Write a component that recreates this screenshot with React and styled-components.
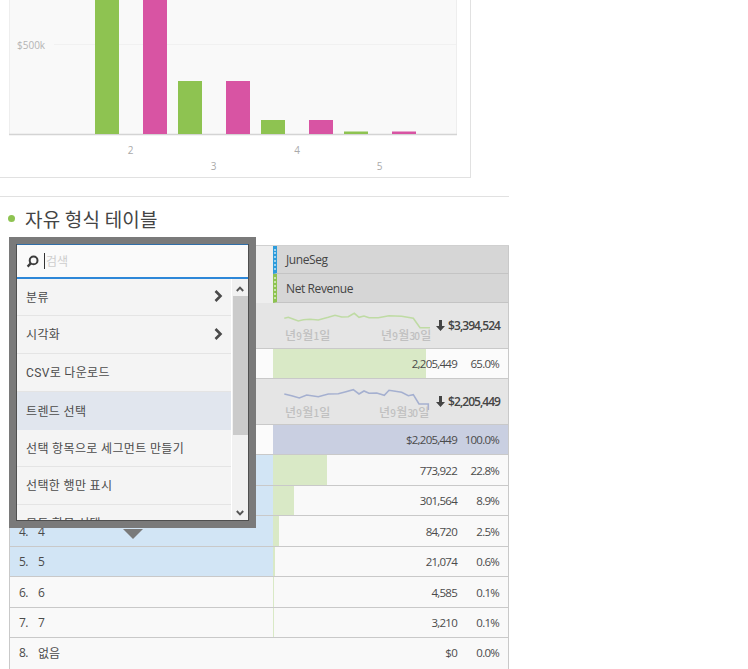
import React from "react";
import styled, { createGlobalStyle } from "styled-components";

const FONT = `"Open Sans", "Noto Sans CJK KR", sans-serif`;

const Global = createGlobalStyle`
  html, body { margin: 0; padding: 0; background: #fff; }
  body { font-family: ${FONT}; color: #4b4b4b; overflow: hidden; }
  * { box-sizing: border-box; }
`;

const Page = styled.div`
  width: 748px;
  height: 669px;
  overflow: hidden;
`;
const Content = styled.div`
  width: 509px;
`;
const ChartPanel = styled.div`
  width: 471px;
  height: 178px;
  border-right: 1px solid #e1e1e1;
  border-bottom: 1px solid #e1e1e1;
`;
const Section = styled.div`
  border-top: 1px solid #e1e1e1;
  margin-top: 18px;
  height: 49px;
  padding: 0 0 5px 8px;
  display: flex;
  align-items: center;
  gap: 10px;
`;
const Dot = styled.span`
  width: 7px;
  height: 7px;
  border-radius: 50%;
  background: #8ec351;
`;
const Title = styled.h2`
  margin: 0;
  font-size: 19px;
  font-weight: 400;
  letter-spacing: 0.2px;
  color: #444;
  font-family: "Noto Sans CJK KR", sans-serif;
`;
const TableWrap = styled.div`
  position: relative;
  margin-left: 9px;
  width: 500px;
`;
const Row = styled.div`
  display: grid;
  grid-template-columns: 263px 1fr;
  height: ${(p) => p.$h}px;
  padding-bottom: ${(p) => (p.$open ? 2 : 0)}px;
  border-bottom: 1px solid #c9c9c9;
  border-left: 1px solid #c9c9c9;
  border-right: 1px solid #c9c9c9;
  background: ${(p) => p.$bg || "#f9f9f9"};
  font-size: 12px;
`;
const LabelCell = styled.div`
  display: flex;
  align-items: center;
  padding-left: 9px;
  background: ${(p) => p.$bg || "transparent"};
`;
const Num = styled.span`
  width: 19px;
  letter-spacing: -0.5px;
`;
const ValueCell = styled.div`
  position: relative;
  display: flex;
  align-items: center;
  justify-content: flex-end;
  padding-right: 9px;
  background: ${(p) => p.$bg || "transparent"};
  font-size: 11.5px;
  letter-spacing: -0.75px;
`;
const Bar = styled.div`
  position: absolute;
  left: 0;
  top: 0;
  bottom: 0;
  background: #d9e9c6;
`;
const Amount = styled.span`
  position: relative;
`;
const Pct = styled.span`
  position: relative;
  width: 42px;
  text-align: right;
`;
const HeaderRow = styled.div`
  display: grid;
  grid-template-columns: 264px 1fr;
  height: ${(p) => p.$h}px;
  background: #eee;
  border-top: ${(p) => (p.$top ? "1px solid #d0d0d0" : "none")};
`;
const HeaderCell = styled.div`
  position: relative;
  display: flex;
  align-items: center;
  background: #d6d6d6;
  border-bottom: 1px solid #c4c4c4;
  padding-left: 9px;
  font-size: 12px;
  letter-spacing: -0.4px;
  color: #444;
  border-left: 4px solid ${(p) => p.$accent};
  border-right: 1px solid #c9c9c9;
  &::before {
    content: "";
    position: absolute;
    left: -3px;
    top: 3px;
    bottom: 3px;
    border-left: 2px dotted rgba(255, 255, 255, 0.55);
  }
`;
const SummaryRow = styled.div`
  position: relative;
  height: 46px;
  background: #e5e5e5;
  border: 1px solid #c9c9c9;
  border-top: none;
  display: flex;
  justify-content: flex-end;
  align-items: center;
  padding-right: 8px;
`;
const Spark = styled.svg`
  position: absolute;
  left: 274px;
  top: 6px;
`;
const SparkDate = styled.span`
  position: absolute;
  top: ${(p) => p.$top}px;
  left: ${(p) => p.$left}px;
  color: #c0c0c0;
  font-size: 12px;
  font-weight: 500;
  font-family: "Noto Sans CJK KR", sans-serif;
  letter-spacing: -0.8px;
  white-space: nowrap;
`;
const Digit = styled.span`
  font-size: 10px;
  margin: 0 1px;
`;
const Total = styled.span`
  position: relative;
  display: flex;
  align-items: center;
  gap: 3px;
  font-size: 12px;
  font-weight: 600;
  letter-spacing: -0.95px;
  color: #444;
`;
const Popup = styled.div`
  position: absolute;
  left: 0;
  top: -8px;
  width: 247px;
  height: 291px;
  background: #7a7a7a;
  padding: 7px;
`;
const PopupInner = styled.div`
  height: 277px;
  background: #f4f4f4;
  border: 1px solid #4f4f4f;
  border-top: none;
  overflow: hidden;
  display: flex;
  flex-direction: column;
`;
const SearchBox = styled.div`
  height: 35px;
  flex: none;
  background: #fafafa;
  border: 1px solid #2f6ea8;
  border-bottom: 2px solid #2d87d8;
  margin: 0 -1px;
  display: flex;
  align-items: center;
  padding-left: 9px;
`;
const SearchText = styled.span`
  font-size: 12px;
  color: #cdcdcd;
  border-left: 1px solid #333;
  margin-left: 5px;
  padding-left: 1px;
  line-height: 16px;
  font-family: "Noto Sans CJK KR", sans-serif;
`;
const MenuArea = styled.div`
  flex: 1;
  display: flex;
  min-height: 0;
`;
const Menu = styled.div`
  width: 214px;
  flex: none;
  overflow: hidden;
`;
const MenuItem = styled.div`
  height: ${(p) => p.$h}px;
  display: flex;
  align-items: center;
  justify-content: space-between;
  padding: 0 8px 2px 9px;
  font-size: 12px;
  letter-spacing: 0.35px;
  color: #4b4b4b;
  font-family: "Roboto", "Noto Sans CJK KR", sans-serif;
  background: ${(p) => (p.$active ? "#e1e6ee" : "transparent")};
  border-bottom: ${(p) => (p.$active ? "none" : "1px solid #e4e4e4")};
`;
const Scrollbar = styled.div`
  flex: 1;
  border-left: 1px solid #fff;
  display: flex;
  flex-direction: column;
  align-items: center;
  background: #f1f1f1;
`;
const ScrollBtn = styled.div`
  height: 17px;
  flex: none;
  display: flex;
  align-items: flex-end;
  padding-bottom: 4px;
  justify-content: center;
`;
const Thumb = styled.div`
  width: 15px;
  height: 139px;
  flex: none;
  background: #cbcbcb;
`;
const ScrollGap = styled.div`
  flex: 1;
`;
const Arrow = styled.div`
  position: absolute;
  left: 114px;
  top: 292px;
  width: 0;
  height: 0;
  border-left: 10px solid transparent;
  border-right: 10px solid transparent;
  border-top: 10px solid #7a7a7a;
`;
const ChartSvg = styled.svg`
  display: block;
`;

const Chart = () => (
  <ChartSvg width="470" height="177">
    <rect x="0" y="0" width="470" height="177" fill="#fff" />
    <rect x="9" y="0" width="447" height="134" fill="#f9f9f9" />
    <line x1="9.5" y1="0" x2="9.5" y2="134" stroke="#eee" />
    <line x1="456.5" y1="0" x2="456.5" y2="134" stroke="#eee" />
    <line x1="54" y1="44.5" x2="456" y2="44.5" stroke="#f1f1f1" />
    <line x1="9" y1="134.5" x2="457" y2="134.5" stroke="#d4d4d4" strokeWidth="1.5" />
    <text x="17" y="49" fontSize="10" fill="#b4b4b4" fontFamily="Open Sans">$500k</text>
    {[
      [95, 0, "#8ec351"],
      [143, 0, "#d854a3"],
      [178, 81, "#8ec351"],
      [226, 81, "#d854a3"],
      [261, 120, "#8ec351"],
      [309, 120, "#d854a3"],
      [344, 131.5, "#8ec351"],
      [392, 131.5, "#d854a3"],
    ].map(([x, y, c]) => (
      <rect key={x} x={x} y={y} width={24} height={134 - y} fill={c} />
    ))}
    {[
      [130.5, 154, "2"],
      [213.5, 170, "3"],
      [297, 154, "4"],
      [379.5, 170, "5"],
    ].map(([x, y, t]) => (
      <text key={t} x={x} y={y} fontSize="10" fill="#aaa" textAnchor="middle" fontFamily="Open Sans">{t}</text>
    ))}
  </ChartSvg>
);

const Sparkline = ({ color, points }) => (
  <Spark width="150" height="34">
    <polyline fill="none" stroke={color} strokeWidth="1.6" points={points} />
  </Spark>
);

const DateLabel = ({ day, left, top }) => (
  <SparkDate $left={left} $top={top}>
    년<Digit>9</Digit>월<Digit>{day}</Digit>일
  </SparkDate>
);

const ArrowDown = () => (
  <svg width="9" height="11" viewBox="0 0 9 11">
    <path d="M3 0h3v6h3L4.5 11 0 6h3z" fill="#444" />
  </svg>
);

const SearchIcon = () => (
  <svg width="13" height="13" viewBox="0 0 13 13">
    <circle cx="7.6" cy="5.4" r="3.9" fill="none" stroke="#3d3d3d" strokeWidth="2" />
    <path d="M5 8.2 1.6 11.6" stroke="#3d3d3d" strokeWidth="2.4" />
  </svg>
);

const MenuChevron = () => (
  <svg width="9" height="12" viewBox="0 0 9 12">
    <path d="M1.5 1 6.5 6 1.5 11" fill="none" stroke="#4a4a4a" strokeWidth="2.6" />
  </svg>
);

const ScrollUp = () => (
  <svg width="8" height="6" viewBox="0 0 8 6">
    <path d="M.8 5 4 1.6 7.2 5" fill="none" stroke="#555" strokeWidth="1.9" />
  </svg>
);

const ScrollDown = () => (
  <svg width="8" height="6" viewBox="0 0 8 6">
    <path d="M.8 1 4 4.4 7.2 1" fill="none" stroke="#555" strokeWidth="1.9" />
  </svg>
);

const rows = [
  { h: 31, blue: true, bar: 54, a: "773,922", p: "22.8%" },
  { h: 30, blue: true, bar: 21, a: "301,564", p: "8.9%" },
  { h: 31, n: "4.", l: "4", blue: true, bar: 6, a: "84,720", p: "2.5%" },
  { h: 30, n: "5.", l: "5", blue: true, bar: 2, a: "21,074", p: "0.6%" },
  { h: 31, n: "6.", l: "6", bar: 1, a: "4,585", p: "0.1%" },
  { h: 30, n: "7.", l: "7", bar: 1, a: "3,210", p: "0.1%" },
  { h: 32, n: "8.", l: "없음", a: "$0", p: "0.0%", open: true },
];

const menu = [
  { t: "분류", arrow: true, h: 37 },
  { t: "시각화", arrow: true, h: 38 },
  { t: "CSV로 다운로드", h: 38 },
  { t: "트렌드 선택", active: true, h: 38 },
  { t: "선택 항목으로 세그먼트 만들기", h: 37 },
  { t: "선택한 행만 표시", h: 38 },
  { t: "모든 항목 선택", h: 38 },
];

export default function App() {
  return (
    <Page>
      <Global />
      <Content>
        <ChartPanel>
          <Chart />
        </ChartPanel>
        <Section>
          <Dot />
          <Title>자유 형식 테이블</Title>
        </Section>
        <TableWrap>
          <HeaderRow $h={29} $top>
            <div />
            <HeaderCell $accent="#2d9cdb">JuneSeg</HeaderCell>
          </HeaderRow>
          <HeaderRow $h={29}>
            <div />
            <HeaderCell $accent="#8ec351">Net Revenue</HeaderCell>
          </HeaderRow>
          <SummaryRow>
            <Sparkline
              color="#bfdba4"
              points="0.3,9.3 4.3,8.3 8.3,9.7 14.3,12 19.3,10.7 26,10.3 34.3,11 44.3,8.3 51,6.3 57.7,8 64.3,7.7 70.3,4.3 75,8.3 80,7 85,8.7 94.3,8.7 105,6.7 117.7,7.3 129.3,9.3 136,18.7 146,18.7"
            />
            <DateLabel day="1" left={275} top={23} />
            <DateLabel day="30" left={371} top={23} />
            <Total>
              <ArrowDown />
              $3,394,524
            </Total>
          </SummaryRow>
          <Row $h={30} $bg="#fbfbfb">
            <LabelCell />
            <ValueCell>
              <Bar style={{ width: 153 }} />
              <Amount>2,205,449</Amount>
              <Pct>65.0%</Pct>
            </ValueCell>
          </Row>
          <SummaryRow>
            <Sparkline
              color="#a5b0d0"
              points="0.3,9 7.7,10.7 15.3,13 22.7,10 34.3,11.7 44.3,9 54.3,8.7 61,7 69.3,4.7 75,9 80,6 85,8.3 92.7,8 100.3,10.3 105,5.3 117.7,7.3 124.3,10.7 129.3,9.7 135,19 144.3,19 144.3,25"
            />
            <DateLabel day="1" left={275} top={24} />
            <DateLabel day="30" left={369} top={24} />
            <Total>
              <ArrowDown />
              $2,205,449
            </Total>
          </SummaryRow>
          <Row $h={30} $bg="#fbfbfb">
            <LabelCell />
            <ValueCell $bg="#c9cfe1">
              <Amount>$2,205,449</Amount>
              <Pct>100.0%</Pct>
            </ValueCell>
          </Row>
          {rows.map((r, i) => (
            <Row key={i} $h={r.h} $open={r.open}>
              <LabelCell $bg={r.blue ? "#d2e5f5" : undefined}>
                {r.n && <Num>{r.n}</Num>}
                {r.l}
              </LabelCell>
              <ValueCell>
                {r.bar && <Bar style={{ width: r.bar }} />}
                <Amount>{r.a}</Amount>
                <Pct>{r.p}</Pct>
              </ValueCell>
            </Row>
          ))}
          <Popup>
            <PopupInner>
              <SearchBox>
                <SearchIcon />
                <SearchText>검색</SearchText>
              </SearchBox>
              <MenuArea>
                <Menu>
                  {menu.map((m) => (
                    <MenuItem key={m.t} $active={m.active} $h={m.h}>
                      {m.t}
                      {m.arrow && <MenuChevron />}
                    </MenuItem>
                  ))}
                </Menu>
                <Scrollbar>
                  <ScrollBtn>
                    <ScrollUp />
                  </ScrollBtn>
                  <Thumb />
                  <ScrollGap />
                  <ScrollBtn>
                    <ScrollDown />
                  </ScrollBtn>
                </Scrollbar>
              </MenuArea>
            </PopupInner>
            <Arrow />
          </Popup>
        </TableWrap>
      </Content>
    </Page>
  );
}
